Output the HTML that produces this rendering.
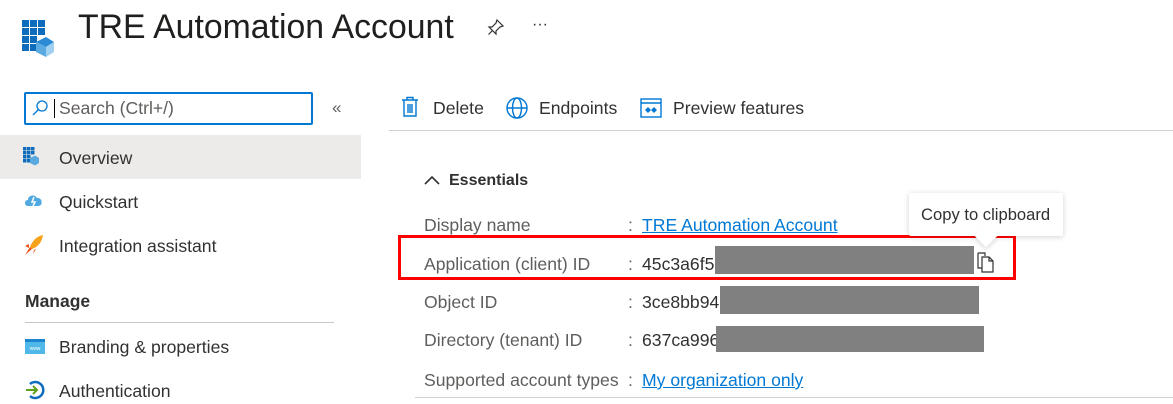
<!DOCTYPE html>
<html><head><style>
*{margin:0;padding:0;box-sizing:border-box}
body{width:1173px;height:404px;overflow:hidden;background:#fff;font-family:"Liberation Sans",sans-serif;color:#323130;position:relative}
.a{position:absolute;white-space:nowrap}
.t{font-size:17.6px}
.lbl{font-size:17.6px;color:#605e5c}
.lnk{color:#0078d4;text-decoration:underline;font-size:17.6px}
.g{position:absolute;background:#808080}
</style></head><body>
<svg class="a" style="left:22px;top:20px" width="34" height="38" viewBox="0 0 34 38">
<g fill="#0f6cbd"><rect x="0" y="0" width="7" height="7"/><rect x="8" y="0" width="7" height="7"/><rect x="16" y="0" width="7" height="7"/>
<rect x="0" y="8" width="7" height="7"/><rect x="8" y="8" width="7" height="7"/><rect x="16" y="8" width="7" height="7"/>
<rect x="0" y="16" width="7" height="7"/><rect x="8" y="16" width="7" height="7"/><rect x="0" y="24" width="7" height="7"/><rect x="8" y="24" width="7" height="7"/></g>
<path d="M14 22 L24 17 L32 22 L24 27Z" fill="#2a8ad4"/><path d="M14 22 L24 27 L24 37 L14 32Z" fill="#5aa9e0"/><path d="M24 27 L32 22 L32 32 L24 37Z" fill="#9fd0f0"/></svg>
<div class="a" style="left:78px;top:8px;font-size:33.8px;color:#201f1e">TRE Automation Account</div>
<svg class="a" style="left:487px;top:18px" width="18" height="18" viewBox="0 0 18 18" fill="none" stroke="#323130" stroke-width="1.2"><path d="M10 2 L16 8 L13 9 L9 13 L9 16 L2 9 L5 9 L9 5Z M5.5 12.5 L1.5 16.5"/></svg>
<div class="a" style="left:532px;top:16px;font-size:16px">···</div>

<div class="a" style="left:24px;top:92px;width:289px;height:33px;border:2px solid #0078d4;border-radius:2px"></div>
<svg class="a" style="left:31px;top:99px" width="18" height="18" viewBox="0 0 18 18" fill="none" stroke="#0078d4" stroke-width="1.3"><circle cx="11" cy="7" r="5"/><path d="M7.5 10.5 L2 16"/></svg>
<div class="a" style="left:54px;top:99px;width:1px;height:19px;background:#000"></div>
<div class="a t" style="left:59px;top:98px;color:#605e5c">Search (Ctrl+/)</div>
<div class="a" style="left:332px;top:98px;font-size:17px;color:#605e5c">«</div>

<div class="a" style="left:0;top:135px;width:361px;height:44px;background:#edebe9"></div>
<svg class="a" style="left:23px;top:147px" width="17" height="19" viewBox="0 0 34 38"><g fill="#0f6cbd"><rect x="0" y="0" width="7" height="7"/><rect x="8" y="0" width="7" height="7"/><rect x="16" y="0" width="7" height="7"/><rect x="0" y="8" width="7" height="7"/><rect x="8" y="8" width="7" height="7"/><rect x="16" y="8" width="7" height="7"/><rect x="0" y="16" width="7" height="7"/><rect x="8" y="16" width="7" height="7"/><rect x="0" y="24" width="7" height="7"/><rect x="8" y="24" width="7" height="7"/></g><path d="M14 22 L24 17 L32 22 L32 32 L24 37 L14 32Z" fill="#5aa9e0"/></svg>
<div class="a t" style="left:59px;top:148px">Overview</div>
<svg class="a" style="left:24px;top:192px" width="20" height="16" viewBox="0 0 20 16"><path d="M4 14 C0 14 0 8 4 8 C4 3 11 2 13 6 C18 5 20 14 14 14Z" fill="#50a9e0"/><path d="M10 5 L8 10 L11 10 L9 14" stroke="#fff" stroke-width="1.5" fill="none"/></svg>
<div class="a t" style="left:59px;top:192px">Quickstart</div>
<svg class="a" style="left:24px;top:234px" width="20" height="22" viewBox="0 0 20 22"><path d="M19 1 C13 2 8 7 6 13 L8 15 C14 13 18 8 19 1Z" fill="#f7a21b"/><path d="M6 13 L1 21 L8 15Z" fill="#e8541c"/><path d="M5 10 L1 12 L5 14Z M10 16 L9 20 L12 15Z" fill="#e8541c"/></svg>
<div class="a t" style="left:59px;top:236px">Integration assistant</div>
<div class="a" style="left:25px;top:291px;font-size:17.5px;font-weight:bold;color:#323130">Manage</div>
<div class="a" style="left:25px;top:322px;width:309px;height:1px;background:#c8c6c4"></div>
<svg class="a" style="left:25px;top:339px" width="20" height="15" viewBox="0 0 20 15"><rect width="20" height="15" fill="#50b8e8"/><rect y="0" width="20" height="3" fill="#1a86cf"/><text x="10" y="11" font-size="5" fill="#fff" text-anchor="middle" font-family="Liberation Sans">www</text></svg>
<div class="a t" style="left:59px;top:337px">Branding &amp; properties</div>
<svg class="a" style="left:25px;top:380px" width="20" height="20" viewBox="0 0 20 20" fill="none"><path d="M5 4 A8 8 0 1 1 5 16" stroke="#0f6cbd" stroke-width="2.5"/><path d="M1 10 L12 10 M8 6 L12 10 L8 14" stroke="#5ea11f" stroke-width="2"/></svg>
<div class="a t" style="left:59px;top:381px">Authentication</div>

<svg class="a" style="left:401px;top:96px" width="18" height="22" viewBox="0 0 18 22" fill="none" stroke="#0078d4" stroke-width="1.4"><path d="M1 4 L17 4 M6 4 L6 1.5 L12 1.5 L12 4 M3 4 L3 20 L15 20 L15 4 M7 8 L7 17 M9 8 L9 17 M11 8 L11 17"/></svg>
<div class="a t" style="left:433px;top:98px">Delete</div>
<svg class="a" style="left:506px;top:97px" width="22" height="22" viewBox="0 0 22 22" fill="none" stroke="#0078d4" stroke-width="1.4"><circle cx="11" cy="11" r="10"/><ellipse cx="11" cy="11" rx="4.5" ry="10"/><path d="M1 11 L21 11"/></svg>
<div class="a t" style="left:539px;top:98px">Endpoints</div>
<svg class="a" style="left:640px;top:98px" width="22" height="20" viewBox="0 0 22 20" fill="none" stroke="#0078d4" stroke-width="1.4"><rect x="1" y="1" width="20" height="18"/><path d="M1 5 L21 5"/><path d="M6 12 l2-2 2 2-2 2z M12 12 l2-2 2 2-2 2z" fill="#0078d4"/></svg>
<div class="a t" style="left:673px;top:98px">Preview features</div>
<div class="a" style="left:389px;top:130px;width:784px;height:1px;background:#d2d0ce"></div>

<svg class="a" style="left:424px;top:174px" width="16" height="12" viewBox="0 0 16 12" fill="none" stroke="#323130" stroke-width="1.6"><path d="M1 10 L8 3 L15 10"/></svg>
<div class="a" style="left:449px;top:172px;font-size:16px;font-weight:bold">Essentials</div>

<div class="a lbl" style="left:424px;top:215px">Display name</div>
<div class="a lbl" style="left:424px;top:254px">Application (client) ID</div>
<div class="a lbl" style="left:424px;top:292px">Object ID</div>
<div class="a lbl" style="left:424px;top:330px">Directory (tenant) ID</div>
<div class="a lbl" style="left:424px;top:370px">Supported account types</div>
<div class="a lbl" style="left:628px;top:215px">:</div>
<div class="a lbl" style="left:628px;top:254px">:</div>
<div class="a lbl" style="left:628px;top:292px">:</div>
<div class="a lbl" style="left:628px;top:330px">:</div>
<div class="a lbl" style="left:628px;top:370px">:</div>
<div class="a lnk" style="left:642px;top:215px">TRE Automation Account</div>
<div class="a t" style="left:642px;top:254px">45c3a6f5-</div>
<div class="a t" style="left:642px;top:292px">3ce8bb94</div>
<div class="a t" style="left:642px;top:330px">637ca996</div>
<div class="a lnk" style="left:642px;top:370px">My organization only</div>
<div class="g" style="left:715px;top:246px;width:259px;height:28px"></div>
<div class="g" style="left:720px;top:286px;width:259px;height:28px"></div>
<div class="g" style="left:716px;top:326px;width:268px;height:26px"></div>
<svg class="a" style="left:977px;top:252px" width="20" height="22" viewBox="0 0 20 22" fill="none" stroke="#323130" stroke-width="1.2"><path d="M1 1 L8 1 L8 4 M1 1 L1 16 L5 16"/><path d="M5 5 L12 5 L16 9 L16 20 L5 20Z M12 5 L12 9 L16 9"/></svg>
<div class="a" style="left:415px;top:397px;width:758px;height:1px;background:#d2d0ce"></div>

<div class="a" style="left:398px;top:235px;width:618px;height:45px;border:3px solid #f00"></div>
<div class="a" style="left:909px;top:193px;width:154px;height:43px;background:#fff;box-shadow:0 1px 6px rgba(0,0,0,.18);border-radius:2px"></div>
<div class="a" style="left:978px;top:228px;width:16px;height:16px;background:#fff;transform:rotate(45deg);box-shadow:2px 2px 4px rgba(0,0,0,.12)"></div>
<div class="a" style="left:921px;top:205px;font-size:16.6px;color:#323130">Copy to clipboard</div>
</body></html>
